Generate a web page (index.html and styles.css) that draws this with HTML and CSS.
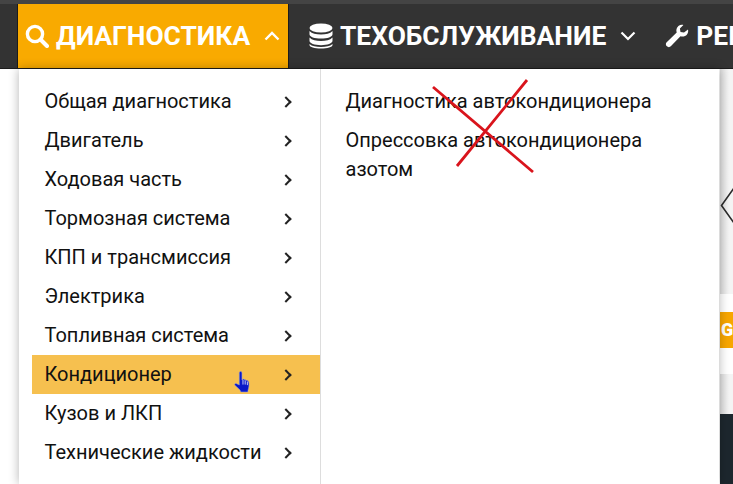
FILE: index.html
```html
<!DOCTYPE html>
<html>
<head>
  <meta charset="UTF-8" />
  <title>Диагностика</title>
  <link rel="stylesheet" href="styles.css">
</head>
<body>
  <!-- Top navigation -->
  <nav class="navbar">
    <a class="nav-item active">
      <svg class="nav-icon" width="24" height="24" viewBox="0 0 24 24"><circle cx="10" cy="10" r="7.6" fill="none" stroke="#fff" stroke-width="3.4"/><path d="M15.500 15.500 L22 22" stroke="#fff" stroke-width="4" stroke-linecap="round"/></svg>
      <span>ДИАГНОСТИКА</span>
      <svg class="chevron" width="16" height="10" viewBox="0 0 16 10"><path d="M1.500 8.500 L8 2 L14.500 8.500" fill="none" stroke="#fff" stroke-width="2.400"/></svg>
    </a>
    <a class="nav-item">
      <svg class="nav-icon" width="24" height="26" viewBox="0 0 24 26"><ellipse cx="12" cy="5" rx="11.500" ry="4.600" fill="#fff"/><path d="M.5 8v3.200C.5 13.800 5.600 15.600 12 15.600s11.500-1.800 11.500-4.400V8C21 10.600 17 11.500 12 11.500S3 10.600.5 8z" fill="#fff"/><path d="M.5 14.600v3.200c0 2.600 5.100 4.400 11.500 4.400s11.500-1.800 11.500-4.400v-3.200C21 17.200 17 18.100 12 18.100S3 17.200.5 14.600z" fill="#fff"/><path d="M.5 21v1c0 2.200 5.100 3.600 11.500 3.600s11.500-1.400 11.500-3.600v-1C21 23.200 17 24 12 24S3 23.200.5 21z" fill="#fff"/></svg>
      <span>ТЕХОБСЛУЖИВАНИЕ</span>
      <svg class="chevron" width="16" height="10" viewBox="0 0 16 10"><path d="M1.500 1.500 L8 8 L14.500 1.500" fill="none" stroke="#fff" stroke-width="2.200"/></svg>
    </a>
    <a class="nav-item">
      <svg class="nav-icon" width="24" height="24" viewBox="0 0 24 24"><path d="M23 5.500c.4 1.500.2 3.500-1 5-1.700 2-4.300 2.500-6.500 1.700L5.800 22.300c-1.100 1.100-2.800 1.100-3.900 0l-.3-.3c-1-1.100-1-2.800.1-3.800l10-9.800c-.8-2.300-.2-4.800 1.700-6.500 1.500-1.200 3.500-1.500 5-1l-3.500 3.500.6 3.500 3.500.7z" fill="#fff"/></svg>
      <span>РЕМОНТ</span>
    </a>
  </nav>

  <!-- Page behind the menu -->
  <main class="content">
    <div class="side-band side-top">
      <svg class="slider-arrow" width="13" height="36" viewBox="0 0 13 36"><path d="M14 0 L1.500 17.500 L14 35" fill="none" stroke="#2b2b2b" stroke-width="1.600"/></svg>
    </div>
    <div class="side-card"><div class="badge">G</div></div>
    <div class="side-band side-mid"></div>
    <div class="side-dark"></div>
  </main>

  <!-- Dropdown -->
  <div class="dropdown">
    <ul class="menu-main">
      <li>Общая диагностика<i class="arrow"></i></li>
      <li>Двигатель<i class="arrow"></i></li>
      <li>Ходовая часть<i class="arrow"></i></li>
      <li>Тормозная система<i class="arrow"></i></li>
      <li>КПП и трансмиссия<i class="arrow"></i></li>
      <li>Электрика<i class="arrow"></i></li>
      <li>Топливная система<i class="arrow"></i></li>
      <li class="hover">Кондиционер
        <svg class="cursor" width="19" height="23" viewBox="0 0 18 22"><path d="M5.500.8c1-.6 2 0 2 1.200v6.500l1-.7c.9-.2 1.400.2 1.600.9.700-.5 1.500-.3 1.800.5.800-.4 1.700 0 1.900.9.600 1.800.6 4.200 0 6.500-.3 1.200-.6 2.200-.7 3.400H6.500c-.4-1.300-1.200-2.200-2.300-3.200L.8 13.600c-.6-.9.100-1.900 1.100-1.700L5 13.400V2c0-.5.200-1 .5-1.200z" fill="#0a18c8" stroke="#8f9ae0" stroke-width=".5"/><path d="M8.500 8.500v4.500M10.600 9v4M12.700 10v3.500" stroke="#e8ebff" stroke-width=".8"/></svg>
        <i class="arrow"></i></li>
      <li>Кузов и ЛКП<i class="arrow"></i></li>
      <li>Технические жидкости<i class="arrow"></i></li>
    </ul>
    <ul class="menu-sub">
      <li>Диагностика автокондиционера</li>
      <li>Опрессовка автокондиционера азотом</li>
    </ul>
    <svg class="cross" width="106" height="96" viewBox="0 0 106 96"><path d="M3 9 L103 94 M97 2 L27 88" stroke="#d9141c" stroke-width="2.800" fill="none"/></svg>
  </div>
</body>
</html>
```

FILE: styles.css
```css
* {
  box-sizing: border-box;
}

html, body {
  height: 484px;
  overflow: hidden;
}

body {
  margin: 0;
  position: relative;
  font-family: Roboto, sans-serif;
  background: #fff;
  color: #111;
}

.navbar {
  display: flex;
  align-items: stretch;
  height: 69px;
  padding-left: 18px;
  white-space: nowrap;
  overflow: hidden;
  background: #333;
  border-top: 4px solid #444;
  border-bottom: 1px solid #1c1c1c;
}

.nav-item {
  display: flex;
  align-items: center;
  flex: none;
  gap: 7px;
  margin-right: 4px;
  padding: 0 9px 0 7px;
  font-size: 26.4px;
  font-weight: 700;
  color: #fff;
}

.nav-item.active {
  background: #f9aa00;
  width: 270px;
  margin-right: 14px;
  box-shadow: -1px 0 0 #1c1c1c, 1px 0 0 #1c1c1c;
}

.nav-icon {
  flex: none;
}

.chevron {
  flex: none;
  margin-left: 7px;
  margin-right: 9px;
}

.content {
  display: flex;
  flex-direction: column;
  align-items: flex-end;
  height: 415px;
}

.side-band {
  width: 13px;
  background: linear-gradient(to right, #ddd, #f4f4f4 70%);
}

.side-top {
  height: 225px;
  padding-top: 119px;
}

.slider-arrow {
  display: block;
}

.side-card {
  width: 13px;
  height: 80px;
  padding-top: 18px;
  background: #fff;
}

.badge {
  height: 36px;
  overflow: hidden;
  padding-left: 1px;
  background: #f7a600;
  color: #fff;
  font-size: 18px;
  font-weight: 900;
  line-height: 36px;
}

.side-mid {
  height: 40px;
}

.side-dark {
  flex: 1;
  width: 13px;
  background: #1d272e;
}

.dropdown {
  position: absolute;
  left: 19px;
  top: 69px;
  width: 700px;
  height: 415px;
  display: flex;
  background: #fff;
  box-shadow: 0 0 10px rgba(0, 0, 0, 0.3);
}

.dropdown ul {
  margin: 0;
  list-style: none;
  font-size: 20px;
}

.menu-main {
  width: 302px;
  padding: 13px 0 0 13px;
  border-right: 1px solid #ddd;
}

.menu-main li {
  position: relative;
  height: 39px;
  padding: 6px 0 0 12.5px;
  line-height: 26px;
}

.menu-main li.hover {
  background: #f6c04f;
}

.arrow {
  position: absolute;
  right: 30px;
  top: 16px;
  width: 8px;
  height: 8px;
  border-top: 2px solid #222;
  border-right: 2px solid #222;
  transform: rotate(45deg);
}

.cursor {
  position: absolute;
  left: 202px;
  top: 16px;
}

.dropdown .menu-sub {
  padding: 14px 40px 0 24.5px;
  flex: 1;
}

.menu-sub li {
  padding: 4px 0 5px;
  line-height: 29.5px;
}

.cross {
  position: absolute;
  left: 411px;
  top: 9px;
}
```
